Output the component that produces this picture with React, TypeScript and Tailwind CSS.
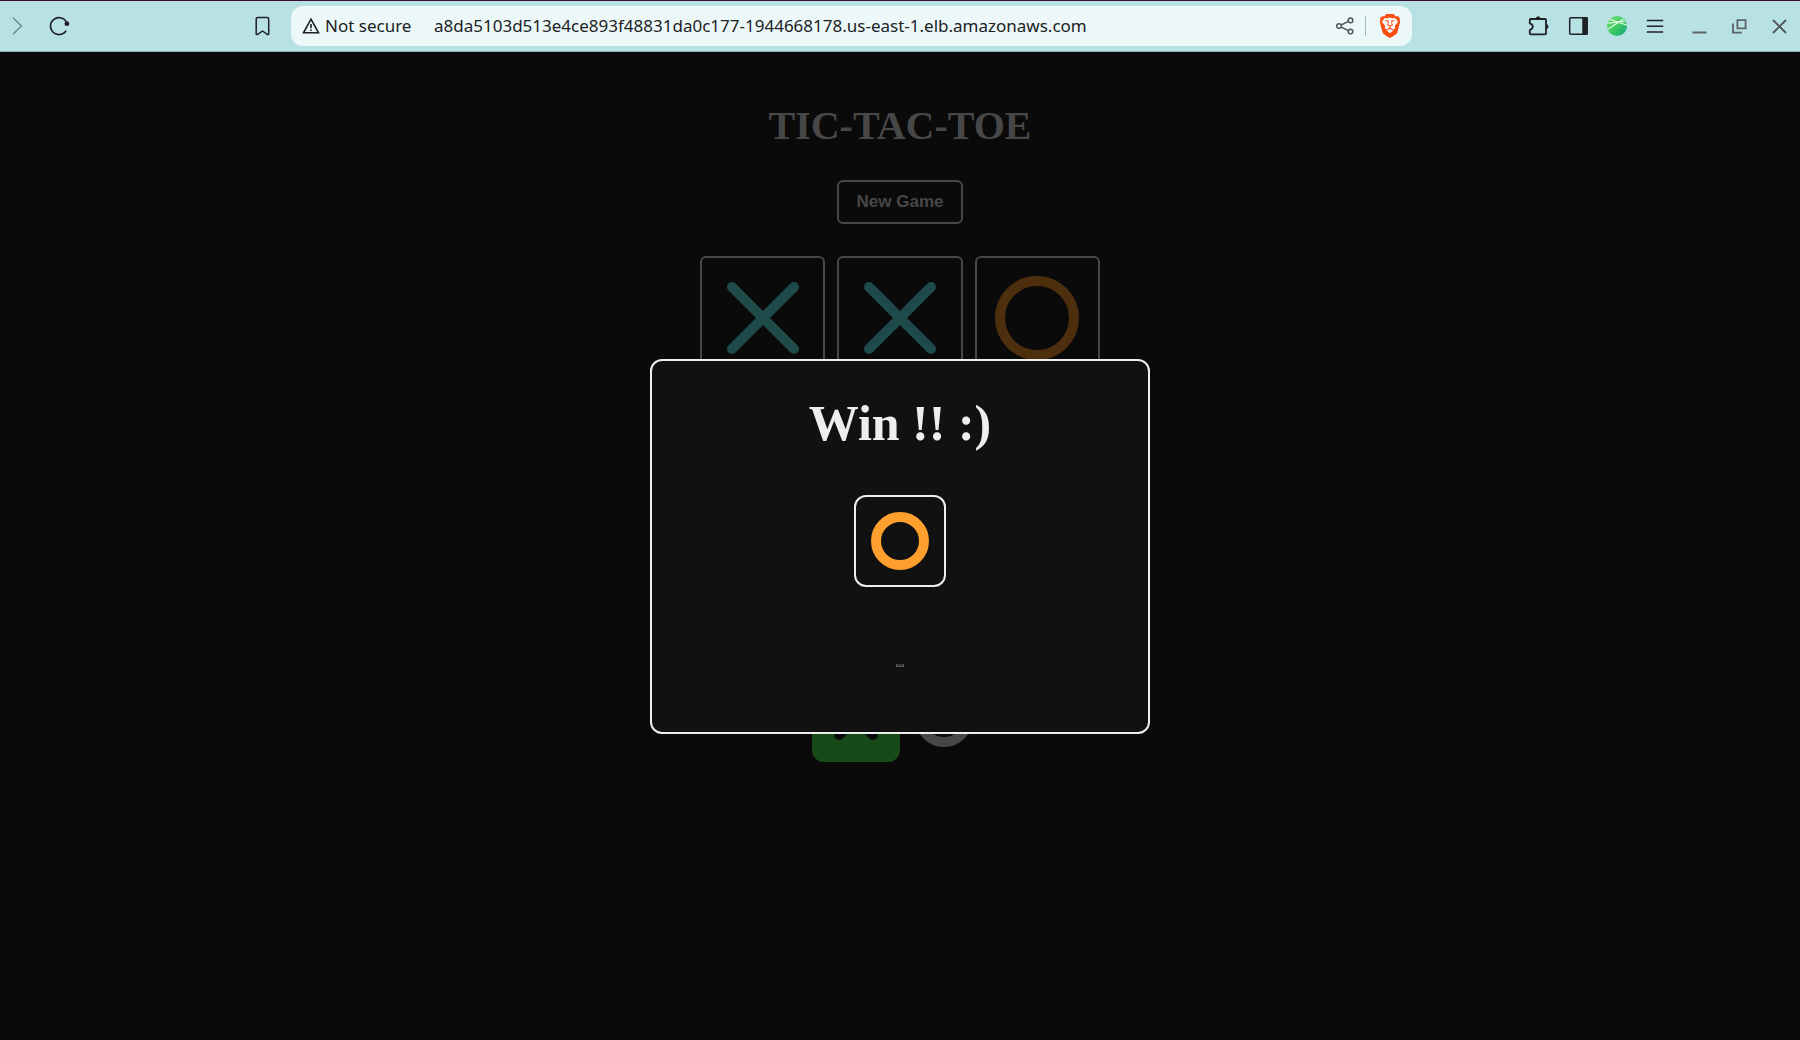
import React from "react";
import { SiBrave } from "react-icons/si";

function Cross({ size, className }: { size: number; className: string }) {
  const end = size - 5;
  return (
    <svg width={size} height={size} viewBox={`0 0 ${size} ${size}`} className={className} fill="none" stroke="currentColor" strokeWidth="10" strokeLinecap="round" aria-hidden="true">
      <path d={`M5 5L${end} ${end}M${end} 5L5 ${end}`} />
    </svg>
  );
}

function Ring({ size, className }: { size: number; className: string }) {
  return (
    <svg width={size} height={size} viewBox={`0 0 ${size} ${size}`} className={className} fill="none" stroke="currentColor" strokeWidth="10" aria-hidden="true">
      <circle cx={size / 2} cy={size / 2} r={size / 2 - 5} />
    </svg>
  );
}

function IconButton({ label, className, children }: { label: string; className?: string; children: React.ReactNode }) {
  return (
    <button type="button" aria-label={label} className={`flex h-6 w-6 shrink-0 items-center justify-center ${className ?? ""}`}>
      {children}
    </button>
  );
}

function BrowserBar() {
  return (
    <header className="flex h-[52px] shrink-0 items-center border-t border-b border-t-[#3b0f35] border-b-[#8fb0b2] bg-[#b8e1e4] font-['Noto_Sans',sans-serif] text-[#202124]">
      <div className="flex w-[291px] shrink-0 items-center pl-[5px] pr-[17px]">
        <IconButton label="Forward" className="text-[#71898b]">
          <svg width="24" height="24" viewBox="0 0 24 24" fill="none" stroke="currentColor" strokeWidth="1.5" aria-hidden="true">
            <path d="M8 3.8L16.3 12L8 20.2" />
          </svg>
        </IconButton>
        <IconButton label="Reload" className="ml-[18px]">
          <svg width="24" height="24" viewBox="0 0 24 24" fill="none" stroke="currentColor" strokeWidth="1.6" strokeLinecap="round" aria-hidden="true">
            <path d="M18.8 17.2A8.5 8.5 0 1 1 19.1 7.4L20 9.5" />
            <circle cx="19.9" cy="9.7" r="2.4" fill="currentColor" stroke="none" />
          </svg>
        </IconButton>
        <IconButton label="Bookmark this tab" className="ml-auto">
          <svg width="24" height="24" viewBox="0 0 24 24" fill="none" stroke="currentColor" strokeWidth="1.5" strokeLinejoin="round" aria-hidden="true">
            <path d="M8 3.5H17Q18.7 3.5 18.7 5.2V20.3L17.6 20.6L12.5 17L7.4 20.6L6.2 20.3V5.2Q6.2 3.5 8 3.5Z" />
          </svg>
        </IconButton>
      </div>
      <div className="flex h-10 min-w-0 flex-1 items-center rounded-xl bg-[#ecf8f8] pl-2">
        <button type="button" className="flex w-[135px] shrink-0 items-center gap-0.5 text-[17px]">
          <svg width="24" height="24" viewBox="0 0 24 24" fill="none" stroke="currentColor" strokeWidth="1.6" aria-hidden="true">
            <path d="M12 5.2L19.5 18.8H4.5Z" />
            <path d="M12 10V14.2M12 15.4V17" />
          </svg>
          Not secure
        </button>
        <input
          type="text"
          aria-label="Address"
          readOnly
          value="a8da5103d513e4ce893f48831da0c177-1944668178.us-east-1.elb.amazonaws.com"
          className="min-w-0 flex-1 bg-transparent text-[17px] outline-none"
        />
        <IconButton label="Share" className="text-[#50585a]">
          <svg width="24" height="24" viewBox="0 0 24 24" fill="none" stroke="currentColor" strokeWidth="1.5" aria-hidden="true">
            <circle cx="6" cy="12" r="2.3" />
            <circle cx="17.5" cy="6.4" r="2.3" />
            <circle cx="17.5" cy="17.6" r="2.3" />
            <path d="M8.1 11L15.4 7.4M8.1 13L15.4 16.6" />
          </svg>
        </IconButton>
        <span className="ml-2 h-5 w-px bg-[#a9bcbd]" />
        <IconButton label="Brave Shields" className="mr-2.5 ml-3">
          <svg width="24" height="24" viewBox="0 0 24 24" aria-hidden="true">
            <path d="M5 6H19L17 17L12 20L7 17Z" fill="#fff" />
            <SiBrave size={24} color="#fb4d12" />
          </svg>
        </IconButton>
      </div>
      <div className="flex w-[388px] shrink-0 items-center justify-end pr-[9px]">
        <IconButton label="Extensions">
          <svg width="24" height="24" viewBox="0 0 24 24" fill="none" stroke="currentColor" strokeWidth="1.8" strokeLinejoin="round" aria-hidden="true">
            <path d="M4.6 5H19.2Q20 5 20 5.8V19.4Q20 20.3 19.2 20.3H4.6Q3.8 20.3 3.8 19.4V16Q6.8 14.7 6.8 12.6Q6.8 10.4 3.8 9.4V5.8Q3.8 5 4.6 5Z" />
            <path d="M9.8 4.6A2.5 2.5 0 0 1 14.6 4.6ZM20.3 10.2A2.5 2.5 0 0 1 20.3 15Z" fill="currentColor" strokeWidth="0.8" stroke="currentColor" />
          </svg>
        </IconButton>
        <IconButton label="Side panel" className="ml-4">
          <svg width="24" height="24" viewBox="0 0 24 24" fill="none" stroke="currentColor" strokeWidth="1.5" aria-hidden="true">
            <rect x="3.7" y="3.7" width="17.4" height="16.6" rx="1" />
            <path d="M17 4H21V20H17Z" fill="currentColor" />
          </svg>
        </IconButton>
        <IconButton label="Profile" className="ml-[15px]">
          <svg width="24" height="24" viewBox="0 0 24 24" aria-hidden="true">
            <defs>
              <linearGradient id="globe" x1="0" y1="0" x2="1" y2="1">
                <stop offset="0" stopColor="#8fe08a" />
                <stop offset="0.5" stopColor="#3fcb60" />
                <stop offset="1" stopColor="#0c9a86" />
              </linearGradient>
              <clipPath id="globe-edge">
                <circle cx="12" cy="12" r="10" />
              </clipPath>
            </defs>
            <g clipPath="url(#globe-edge)">
              <rect width="24" height="24" fill="url(#globe)" />
              <path d="M4 5L22 11.2M2.5 15.5L18.5 5M2 9.2L22 7" fill="none" stroke="#e4fbe6" strokeWidth="1.1" />
            </g>
          </svg>
        </IconButton>
        <IconButton label="Menu" className="ml-3.5">
          <svg width="24" height="24" viewBox="0 0 24 24" fill="none" stroke="currentColor" strokeWidth="1.6" aria-hidden="true">
            <path d="M3.8 6.5H20.2M3.8 12.2H20.2M3.8 18H20.2" />
          </svg>
        </IconButton>
        <IconButton label="Minimize" className="ml-5 text-[#5a6465]">
          <svg width="24" height="24" viewBox="0 0 24 24" fill="none" stroke="currentColor" strokeWidth="2" aria-hidden="true">
            <path d="M5.5 18.5H19.5" />
          </svg>
        </IconButton>
        <IconButton label="Restore" className="ml-4 text-[#5a6465]">
          <svg width="24" height="24" viewBox="0 0 24 24" fill="none" stroke="currentColor" strokeWidth="1.8" aria-hidden="true">
            <path d="M10.4 6.1H18.6V14.3H10.4Z M6 9.5V18.6H14.8" />
          </svg>
        </IconButton>
        <IconButton label="Close" className="ml-4 text-[#4e5657]">
          <svg width="24" height="24" viewBox="0 0 24 24" fill="none" stroke="currentColor" strokeWidth="1.9" aria-hidden="true">
            <path d="M6 6L19 19M19 6L6 19" />
          </svg>
        </IconButton>
      </div>
    </header>
  );
}

const board = ["X", "X", "O", "", "", "", "", "", ""];

function Game() {
  return (
    <div className="flex flex-col items-center pt-[50px]">
      <h1 className="text-[40px] leading-[48px] font-bold text-[#474747]">TIC-TAC-TOE</h1>
      <button
        type="button"
        className="mt-[30px] h-11 w-[126px] rounded-md border-2 border-[#474747] font-['Liberation_Sans',Arial,sans-serif] text-[17px] font-bold text-[#474747]"
      >
        New Game
      </button>
      <div className="mt-8 grid w-[400px] grid-cols-3 gap-3">
        {board.map((mark, i) => (
          <button
            key={i}
            type="button"
            aria-label={`Cell ${i + 1} ${mark}`}
            className="flex aspect-square items-center justify-center rounded-md border-2 border-[#474747] pb-0.5"
          >
            {mark === "X" && <Cross size={72} className="text-[#1e4b4a]" />}
            {mark === "O" && <Ring size={84} className="text-[#4d2f0e]" />}
          </button>
        ))}
      </div>
      <div className="mt-[18px] flex">
        <div className="flex size-[88px] items-center justify-center rounded-xl bg-[#164a18]">
          <Cross size={44} className="text-[#0a0a0a]" />
        </div>
        <div className="flex size-[88px] items-center justify-center">
          <Ring size={58} className="text-[#474747]" />
        </div>
      </div>
    </div>
  );
}

function WinDialog() {
  return (
    <div className="absolute inset-0 flex items-center justify-center">
      <section role="dialog" aria-label="Win" className="flex h-[375px] w-[500px] flex-col items-center rounded-xl border-2 border-[#eee] bg-[#111]">
        <h2 className="mt-[34px] text-[50px] leading-[56px] font-bold text-[#eee]">Win !! :)</h2>
        <div className="mt-11 flex size-[92px] items-center justify-center rounded-xl border-2 border-[#eee]">
          <Ring size={58} className="text-[#ff9f2e]" />
        </div>
        <button type="button" aria-label="New Game" className="mt-[77px] h-[3px] w-2 border border-t-0 border-[#5c5c5c] bg-[#333]" />
      </section>
    </div>
  );
}

export default function App() {
  return (
    <div className="flex min-h-screen flex-col bg-[#0a0a0a]">
      <BrowserBar />
      <main className="relative flex-1 font-['Liberation_Serif','Times_New_Roman',serif]">
        <Game />
        <WinDialog />
      </main>
    </div>
  );
}
